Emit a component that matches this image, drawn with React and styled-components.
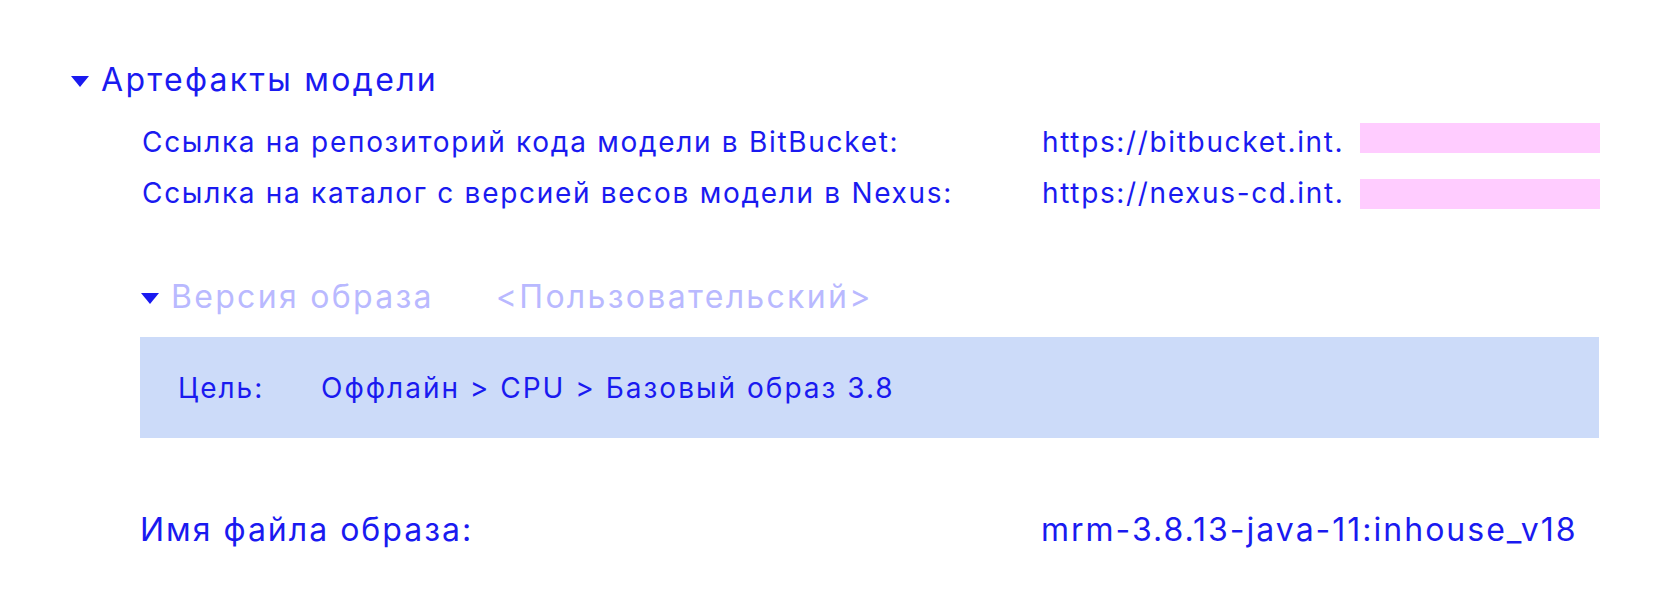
import styled, { createGlobalStyle } from "styled-components";

const GlobalStyle = createGlobalStyle`
  body {
    margin: 0;
    background: #ffffff;
    font-family: Inter, "Noto Sans", sans-serif;
    color: #1a1af0;
  }
`;

const Page = styled.div`
  width: 1660px;
  height: 600px;
  box-sizing: border-box;
  padding: 60px 61px 0 71px;
`;

const Heading = styled.div`
  display: flex;
  align-items: center;
  gap: 12px;
  font-size: 32px;
  line-height: 40px;
  letter-spacing: 2.3px;
`;

const Triangle = styled.span`
  width: 0;
  height: 0;
  border-left: 9.5px solid transparent;
  border-right: 9.5px solid transparent;
  border-top: 11px solid #1a1af0;
  margin-top: 2px;
`;

const Section = styled.div`
  padding-left: 71px;
`;

const LinkRows = styled.div`
  display: flex;
  flex-direction: column;
  gap: 15px;
  margin-top: 24px;
`;

const LinkRow = styled.div`
  display: grid;
  grid-template-columns: 900px 318px 240px;
  align-items: start;
  font-size: 28px;
  line-height: 36px;
  letter-spacing: 1.7px;
`;

const Value = styled.span`
  white-space: nowrap;
  letter-spacing: 1.65px;
`;

const Masked = styled.span`
  height: 30px;
  background: #ffccff;
  margin-top: ${(props) => props.shift || 0}px;
`;

const SubHeading = styled(Heading)`
  margin-top: 66px;
  margin-left: -1px;
`;

const Muted = styled.span`
  color: #b9b9ff;
  margin-right: ${(props) => props.space || 0}px;
`;

const TargetBox = styled.div`
  margin-top: 20px;
  margin-left: -2px;
  height: 101px;
  background: #ccdbf9;
  display: flex;
  align-items: center;
  padding-left: 38px;
  font-size: 28px;
  letter-spacing: 2px;
`;

const TargetLabel = styled.span`
  width: 143px;
`;

const FileRow = styled.div`
  display: grid;
  grid-template-columns: 901px auto;
  margin-top: 73px;
  margin-left: -2px;
  font-size: 32px;
  line-height: 38px;
  letter-spacing: 2px;
  white-space: nowrap;
`;

export default function App() {
  return (
    <>
      <GlobalStyle />
      <Page>
        <Heading>
          <Triangle />
          Артефакты модели
        </Heading>
        <Section>
          <LinkRows>
            <LinkRow>
              <span>Ссылка на репозиторий кода модели в BitBucket:</span>
              <Value>https://bitbucket.int.</Value>
              <Masked shift={-1} />
            </LinkRow>
            <LinkRow>
              <span>Ссылка на каталог с версией весов модели в Nexus:</span>
              <Value>https://nexus-cd.int.</Value>
              <Masked shift={4} />
            </LinkRow>
          </LinkRows>
          <SubHeading>
            <Triangle />
            <span>
              <Muted space={62}>Версия образа</Muted>
              <Muted>&lt;Пользовательский&gt;</Muted>
            </span>
          </SubHeading>
          <TargetBox>
            <TargetLabel>Цель:</TargetLabel>
            <span>Оффлайн &gt; CPU &gt; Базовый образ 3.8</span>
          </TargetBox>
          <FileRow>
            <span>Имя файла образа:</span>
            <span>mrm-3.8.13-java-11:inhouse_v18</span>
          </FileRow>
        </Section>
      </Page>
    </>
  );
}
